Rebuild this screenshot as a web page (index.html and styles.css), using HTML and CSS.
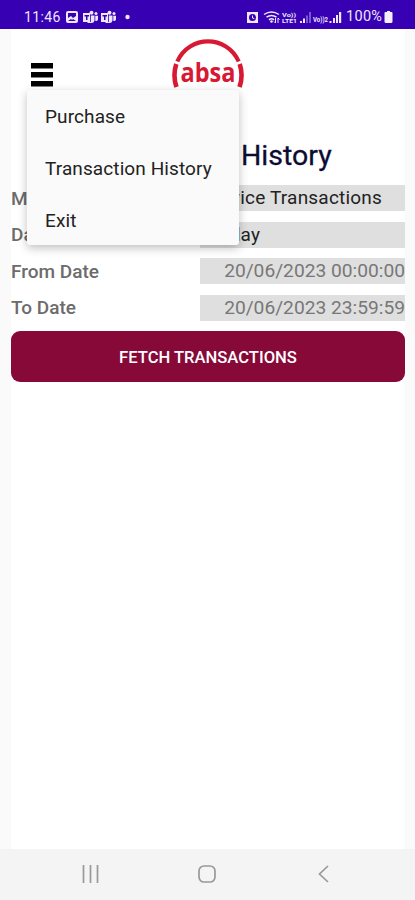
FILE: index.html
```html
<!DOCTYPE html>
<html lang="en">
<head>
<meta charset="utf-8">
<title>Transaction History</title>
<link rel="stylesheet" href="styles.css">
</head>
<body>
<header class="status">
  <span class="clock">11:46</span>
  <svg class="notifications" width="68" height="16" viewBox="0 0 68 16" fill="#eee6ff">
    <path fill-rule="evenodd" d="M3 2h8q2 0 2 2v8q0 2-2 2H3q-2 0-2-2V4q0-2 2-2zm0 2v5l3-2 2 2 3-2V4zm0 8h8l-3-2-1 1-1-1z"/>
    <g id="teams"><path fill-rule="evenodd" d="M18 4h7v9h-7zm1.500 2v1.500h1.500V11h1.500V7.500H24V6z"/><circle cx="26.500" cy="3.800" r="2"/><circle cx="31" cy="4.500" r="1.500"/><path d="M25.800 6.500h3.700v5q-.5 3-4 2.500h-3v-1h3.300zM30.300 6.800H33v3.700q-.7 2-2.700 1.500z"/></g>
    <use href="#teams" x="18"/>
    <circle cx="62.500" cy="8" r="2.200"/>
  </svg>
  <svg class="signals" width="98" height="16" viewBox="0 0 98 16" fill="#eee6ff">
    <path fill-rule="evenodd" d="M1 3h11v11H1zm5.500 2a3.500 3.500 0 1 0 0 7 3.500 3.500 0 0 0 0-7zM6 6.500h1v2l1.500 1-.5.700-2-1.200z"/>
    <g fill="none" stroke="#eee6ff" stroke-width="1.500"><path d="M18 5.500q7.500-5 15 0M20.500 8.200q5-3.500 10 0M23 10.800q2.500-2 5 0"/><path d="M29.500 9v5m-1.500-1.500l1.500 1.500M32 14V9l1.500 1.500" stroke-width="1"/></g>
    <circle cx="25.500" cy="12.500" r="1.300"/>
    <text x="36" y="7.500" class="network" textLength="14" lengthAdjust="spacingAndGlyphs">Vo))</text><text x="36" y="14" class="network" textLength="15" lengthAdjust="spacingAndGlyphs">LTE1</text>
    <path d="M54 12h2v2h-2zM57 9.500h2V14h-2z"/><path opacity=".38" d="M60 6.500h2V14h-2zM63 3h2v11h-2z"/>
    <text x="67" y="13" class="network second" textLength="15" lengthAdjust="spacingAndGlyphs">Vo))2</text>
    <path d="M83.500 12h2v2h-2zM87 9h2v5h-2zM90 6h2v8h-2zM93 3h2.200v11H93z"/>
  </svg>
  <span class="percent">100%</span>
  <svg class="battery" width="9" height="12" viewBox="0 0 9 12"><path fill="#f4efff" d="M3 0h3v1h1.500q1 0 1 1v8.500Q8.500 12 7 12H2Q.5 12 .5 10.500V2q0-1 1-1H3z"/></svg>
</header>
<main class="screen">
  <div class="toolbar">
    <div class="menu-anchor">
      <svg class="hamburger" width="22" height="24" viewBox="0 0 22 24"><path d="M0 0h22v5.500H0zM0 9h22v5.500H0zM0 18h22v5.500H0z"/></svg>
      <nav class="menu"><a>Purchase</a><a>Transaction History</a><a>Exit</a></nav>
    </div>
    <svg class="logo" width="74" height="56" viewBox="0 0 74 56">
      <g fill="none" stroke="#d71934" stroke-width="4.200"><path d="M6.300 22.500C18-4.300 56-4.300 67.700 22.500"/><path stroke-width="4.600" d="M5.300 25Q1.500 36.500 5.500 48M68.700 25Q72.500 36.500 68.500 48"/></g>
      <text x="9.500" y="43" textLength="55" lengthAdjust="spacingAndGlyphs">absa</text>
    </svg>
  </div>
  <h1>Transaction History</h1>
  <div class="form">
    <div class="row"><label>Mode</label><div class="value choice">Device Transactions</div></div>
    <div class="row"><label>Date</label><div class="value choice">Today</div></div>
    <div class="row"><label>From Date</label><div class="value date">20/06/2023 00:00:00</div></div>
    <div class="row"><label>To Date</label><div class="value date">20/06/2023 23:59:59</div></div>
  </div>
  <button class="fetch">FETCH TRANSACTIONS</button>
</main>
<footer class="navigation">
  <svg width="18" height="18" viewBox="0 0 18 18"><path d="M1.500 0v18M8.500 0v18M15.500 0v18"/></svg>
  <svg width="18" height="18" viewBox="0 0 18 18"><rect x="1" y="1" width="16" height="16" rx="5"/></svg>
  <svg width="18" height="18" viewBox="0 0 18 18"><path d="M14 1L5.500 9l8.500 8"/></svg>
</footer>
</body>
</html>
```
FILE: styles.css
```css
* { box-sizing: border-box; }
body {
  margin: 0;
  height: 900px;
  display: flex;
  flex-direction: column;
  overflow: hidden;
  background: #fafafa;
  font-family: Roboto, sans-serif;
}
.status {
  height: 29px;
  flex: none;
  display: flex;
  align-items: center;
  padding: 4px 22px 0 24px;
  background: #3700b3;
  color: #eee6ff;
  font-size: 14px;
}
.clock { width: 41px; letter-spacing: .35px; }
.signals { margin-left: auto; }
.percent { width: 38px; margin-left: 2px; font-size: 14.500px; letter-spacing: .3px; }
.battery { margin-left: 0; }
.network { font: bold 6px Roboto, sans-serif; }
.second { font-size: 8px; }
.screen {
  flex: 1;
  margin: 0 10px 0 11px;
  background: #fff;
}
.toolbar {
  height: 103px;
  padding: 10px 0 0 19px;
  display: flex;
  align-items: flex-start;
}
.menu-anchor { position: relative; padding-top: 24px; width: 141px; z-index: 1; }
.hamburger { display: block; margin-left: 1px; }
.menu {
  position: absolute;
  left: -3px;
  top: 51px;
  width: 212px;
  height: 155px;
  border-radius: 3px;
  background: #fafafa;
  box-shadow: 0 3px 10px rgba(0, 0, 0, .25);
}
.menu a {
  display: block;
  height: 52px;
  padding-left: 18px;
  line-height: 54px;
  font-size: 19px;
  letter-spacing: .1px;
  color: #222;
  white-space: nowrap;
}
.logo { font: bold 27px "Open Sans", sans-serif; fill: #d71934; }
h1 {
  height: 53px;
  margin: 0;
  text-align: center;
  font-size: 28.500px;
  font-weight: 400;
  line-height: 48px;
  color: #0c0c32;
  -webkit-text-stroke: .3px #0c0c32;
}
.form { display: grid; row-gap: 10.500px; }
.row { height: 26px; display: flex; align-items: center; }
.row label {
  width: 189px;
  color: #6c6c6c;
  font-size: 19px;
  font-weight: 500;
}
.value {
  flex: 1;
  height: 26px;
  background: #dfdfdf;
  font-size: 19px;
  line-height: 26px;
  white-space: nowrap;
}
.choice { padding-left: 8px; color: #222; letter-spacing: .2px; }
.date { text-align: right; color: #777; font-size: 19.200px; }
.fetch {
  display: block;
  width: 100%;
  height: 51px;
  margin-top: 10.500px;
  padding: 1px 0 0;
  border: 0;
  border-radius: 9px;
  background: #860938;
  color: #fff;
  font: 500 16.600px Roboto, sans-serif;
}
.navigation {
  height: 51px;
  flex: none;
  display: flex;
  justify-content: space-between;
  align-items: center;
  padding: 0 83px 2px 82px;
  background: #f4f4f4;
}
.navigation svg { fill: none; stroke: #999; stroke-width: 1.700; }
```
